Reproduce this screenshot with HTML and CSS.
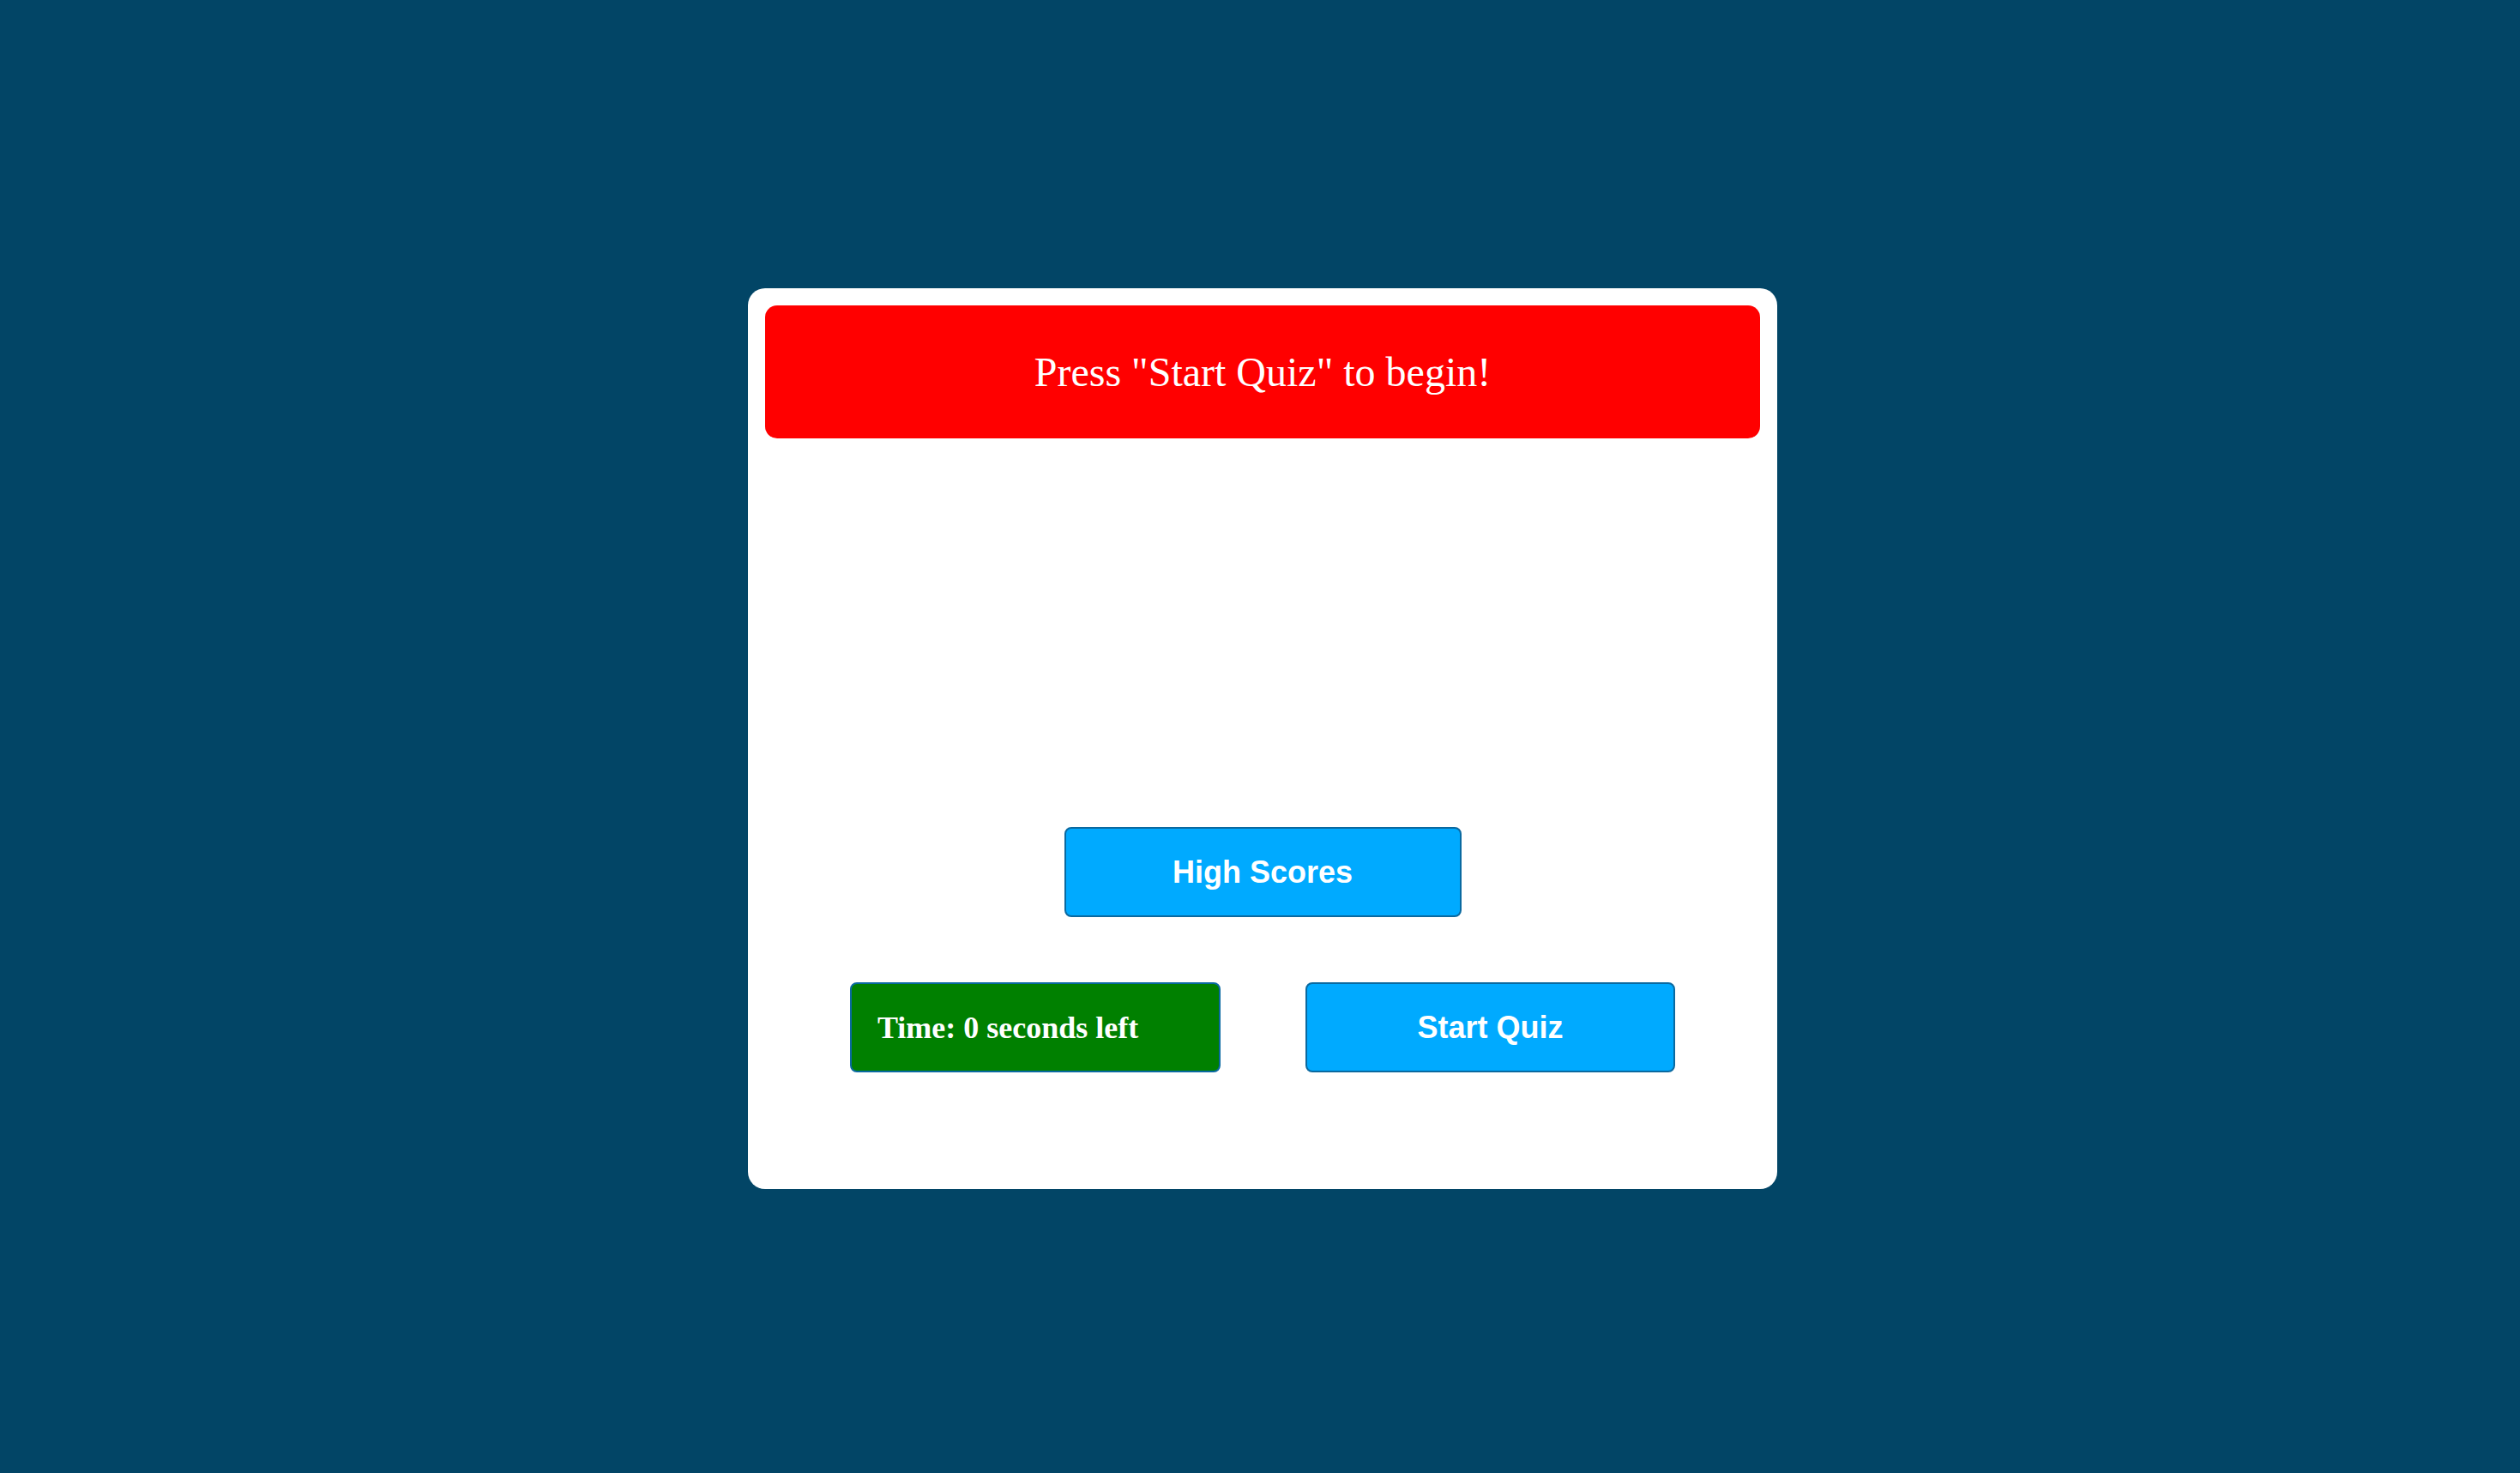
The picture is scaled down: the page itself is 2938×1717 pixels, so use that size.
FILE: index.html
```html
<!DOCTYPE html>
<html lang="en">
<head>
<meta charset="utf-8">
<title>Code Quiz</title>
<link rel="stylesheet" href="styles.css">
</head>
<body>
<div class="stage">
  <main class="card">
    <header class="banner">
      <h1 class="banner-title">Press "Start Quiz" to begin!</h1>
    </header>
    <section class="question-area"></section>
    <div class="scores-row">
      <button class="btn btn-blue btn-scores">High Scores</button>
    </div>
    <div class="controls-row">
      <div class="timer">Time: 0 seconds left</div>
      <button class="btn btn-blue btn-start">Start Quiz</button>
    </div>
  </main>
</div>
</body>
</html>
```
FILE: styles.css
```css
html, body {
  margin: 0;
  padding: 0;
}
body {
  background: #024566;
  font-family: "Liberation Serif", "Times New Roman", serif;
}
.stage {
  box-sizing: border-box;
  height: 100vh;
  display: flex;
  align-items: center;
  justify-content: center;
  padding: 5px 0 0 6px;
}
.card {
  box-sizing: border-box;
  width: 1200px;
  height: 1050px;
  background: #ffffff;
  border-radius: 20px;
  padding: 20px;
  display: flex;
  flex-direction: column;
}
.banner {
  height: 155px;
  background: #ff0000;
  border-radius: 14px;
  display: flex;
  align-items: center;
  justify-content: center;
}
.banner-title {
  margin: 0;
  font-weight: normal;
  font-size: 48px;
  color: #ffffff;
  line-height: 1;
}
.question-area {
  height: 453px;
}
.scores-row {
  display: flex;
  justify-content: center;
}
.btn {
  box-sizing: border-box;
  border: 2px solid #0a69a0;
  border-radius: 8px;
  color: #ffffff;
  font-family: "Liberation Sans", Arial, sans-serif;
  font-weight: bold;
  font-size: 36px;
  padding: 0;
  cursor: pointer;
}
.btn-blue {
  background: #00aaff;
}
.btn-scores {
  width: 463px;
  height: 105px;
}
.controls-row {
  margin-top: 76px;
  display: flex;
  justify-content: space-evenly;
}
.timer {
  box-sizing: border-box;
  width: 432px;
  height: 105px;
  background: #008000;
  border: 2px solid #0a69a0;
  border-radius: 8px;
  color: #ffffff;
  font-weight: bold;
  font-size: 36px;
  display: flex;
  align-items: center;
  padding-left: 30px;
}
.btn-start {
  width: 431px;
  height: 105px;
}
```
